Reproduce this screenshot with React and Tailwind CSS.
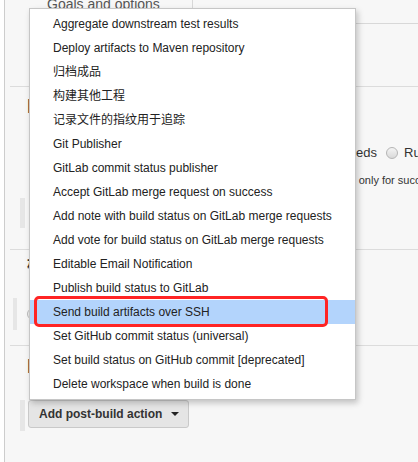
const items = [
  "Aggregate downstream test results",
  "Deploy artifacts to Maven repository",
  "归档成品",
  "构建其他工程",
  "记录文件的指纹用于追踪",
  "Git Publisher",
  "GitLab commit status publisher",
  "Accept GitLab merge request on success",
  "Add note with build status on GitLab merge requests",
  "Add vote for build status on GitLab merge requests",
  "Editable Email Notification",
  "Publish build status to GitLab",
  "Send build artifacts over SSH",
  "Set GitHub commit status (universal)",
  "Set build status on GitHub commit [deprecated]",
  "Delete workspace when build is done",
];

function Radio() {
  return (
    <span className="inline-block w-[12px] h-[12px] rounded-full border border-[#b5b5b5] bg-gradient-to-b from-[#f4f4f4] to-[#d9d9d9]" />
  );
}

export default function App() {
  return (
    <div className="relative w-[418px] h-[462px] overflow-hidden bg-white font-['Liberation_Sans',Arial,'Noto_Sans_CJK_SC',sans-serif]">

      {/* PAGE BEHIND THE MENU */}
      <div className="ml-[4px] h-full border-l border-[#cdcdcd] bg-[#f7f7f7]">

        <div className="flex h-[24px]">
          <div className="w-[187px] pl-[42px] -mt-[4px] text-[14px] leading-[16px] text-[#555] whitespace-nowrap">
            Goals and options
          </div>
          <div className="flex-1 border-l border-b border-[#d8d8d8]" />
        </div>

        <div className="h-[62px]" />

        {/* Post Steps */}
        <div className="ml-[5px] border-t border-[#dcdcdc] pt-[7px] pb-[21px]">
          <div className="pl-[17px] text-[20px] leading-[24px] font-bold text-[#333] whitespace-nowrap">
            Post Steps
          </div>
          <div className="mt-[25px] h-[20px] flex items-center pl-[209px] text-[13px] text-[#333] whitespace-nowrap">
            <Radio />
            <span className="ml-[5px]">Run only if build succeeds</span>
            <span className="ml-[9px] flex"><Radio /></span>
            <span className="ml-[6px]">Run regardless of build result</span>
          </div>
          <div className="mt-[10px] pl-[194px] text-[11px] leading-[14px] text-[#333] whitespace-nowrap">
            Should the post-build steps run only for successful builds, etc.
          </div>
          <div className="mt-[11px] ml-[10px] w-[5px] h-[30px] bg-[#e6e6e6]" />
        </div>

        {/* 构建设置 */}
        <div className="ml-[5px] border-t border-[#dcdcdc] pt-[5px] pb-[15px]">
          <div className="pl-[17px] text-[16px] leading-[20px] font-bold text-[#333] whitespace-nowrap">
            构建设置
          </div>
          <div className="mt-[23px] flex items-center">
            <div className="ml-[3px] w-[4px] h-[32px] bg-[#e6e6e6]" />
            <span className="ml-[10px] w-[12px] h-[12px] rounded-full border border-[#bbb] bg-[#f2f2f2]" />
          </div>
        </div>

        {/* Post-build Actions */}
        <div className="ml-[5px] border-t border-[#dcdcdc] pt-[8px]">
          <div className="pl-[17px] text-[20px] leading-[24px] font-bold text-[#333] whitespace-nowrap">
            Post-build Actions
          </div>
          <div className="mt-[22px] flex items-start">
            <div className="ml-[10px] w-[5px] h-[31px] bg-[#e6e6e6]" />
            <button
              type="button"
              className="ml-[3px] h-[28px] flex items-center pl-[10px] pr-[9px] border border-[#c9c9c9] rounded-[3px] bg-[#e5e5e5] text-[12px] font-bold text-[#333] whitespace-nowrap"
            >
              Add post-build action
              <span className="ml-[9px] w-0 h-0 border-l-[4px] border-r-[4px] border-t-[4px] border-l-transparent border-r-transparent border-t-[#222]" />
            </button>
          </div>
        </div>

      </div>

      {/* DROPDOWN MENU */}
      <div className="absolute left-[29px] top-[8px] w-[327px] py-[3px] bg-white border border-[#c6c6c6] shadow-[2px_3px_6px_rgba(0,0,0,0.22)]">
        {items.map((label, i) => (
          <div
            key={i}
            className={`relative h-[24px] leading-[24px] pl-[23px] text-[12px] text-[#222] whitespace-nowrap ${
              i === 12 ? "bg-[#b3d4fc]" : ""
            }`}
          >
            {label}
            {i === 12 && (
              <div className="absolute left-[4px] -top-[4px] w-[294px] h-[31px] border-[3px] border-[#ff2424] rounded-[5px]" />
            )}
          </div>
        ))}
      </div>

    </div>
  );
}
